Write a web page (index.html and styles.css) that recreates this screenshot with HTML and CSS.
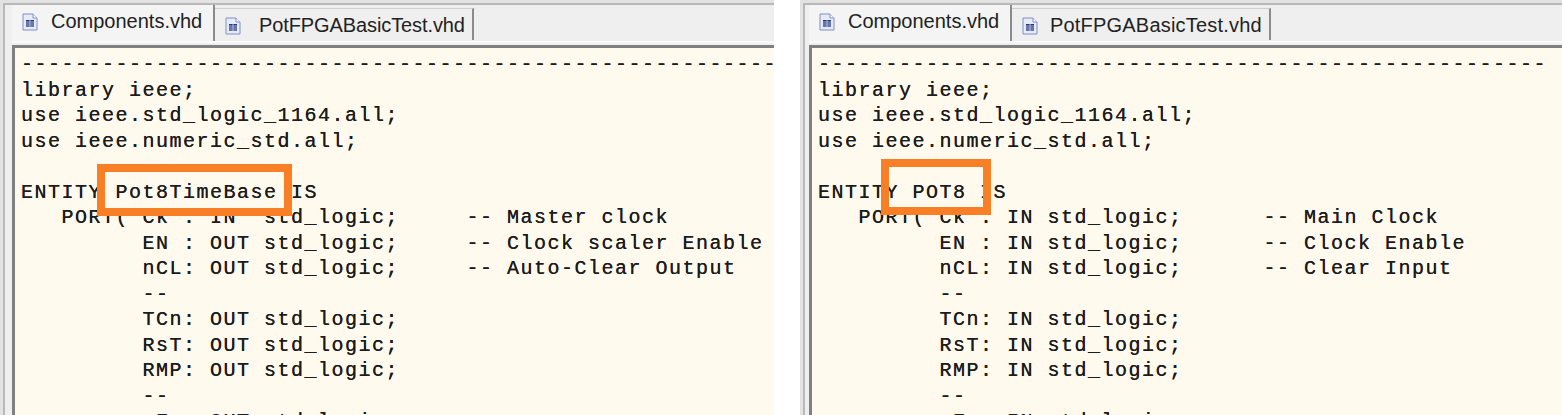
FILE: index.html
```html
<!DOCTYPE html>
<html lang="en">
<head>
<meta charset="utf-8">
<title>VHDL components</title>
<link rel="stylesheet" href="styles.css">
</head>
<body>
<div class="shots">
  <section class="panel panel-left">
    <div class="tabs">
      <div class="tab tab-active">
        <svg class="doc" viewBox="0 0 16 18"><path d="M1 1h10l4 4v12H1z" fill="#e6ebf8" stroke="#7f90c6"/><path d="M11 1v4h4" fill="#fff" stroke="#7f90c6"/><path d="M4 7h8v7H4z" fill="#26387f"/><path d="M4 9h8M4 11h8M4 13h8M8 7v7" stroke="#c9d3ef" stroke-width=".8"/></svg>
        <span>Components.vhd</span>
      </div>
      <div class="tab tab-second">
        <svg class="doc" viewBox="0 0 16 18"><path d="M1 1h10l4 4v12H1z" fill="#e6ebf8" stroke="#7f90c6"/><path d="M11 1v4h4" fill="#fff" stroke="#7f90c6"/><path d="M4 7h8v7H4z" fill="#26387f"/><path d="M4 9h8M4 11h8M4 13h8M8 7v7" stroke="#c9d3ef" stroke-width=".8"/></svg>
        <span>PotFPGABasicTest.vhd</span>
      </div>
    </div>
    <pre class="code">------------------------------------------------------------------
library ieee;
use ieee.std_logic_1164.all;
use ieee.numeric_std.all;

ENTITY Pot8TimeBase IS
   PORT( Ck : IN  std_logic;     -- Master clock
         EN : OUT std_logic;     -- Clock scaler Enable
         nCL: OUT std_logic;     -- Auto-Clear Output
         --
         TCn: OUT std_logic;
         RsT: OUT std_logic;
         RMP: OUT std_logic;
         --
         nFr: OUT std_logic;</pre>
    <div class="mark mark-left"></div>
  </section>
  <section class="panel panel-right">
    <div class="tabs">
      <div class="tab tab-active">
        <svg class="doc" viewBox="0 0 16 18"><path d="M1 1h10l4 4v12H1z" fill="#e6ebf8" stroke="#7f90c6"/><path d="M11 1v4h4" fill="#fff" stroke="#7f90c6"/><path d="M4 7h8v7H4z" fill="#26387f"/><path d="M4 9h8M4 11h8M4 13h8M8 7v7" stroke="#c9d3ef" stroke-width=".8"/></svg>
        <span>Components.vhd</span>
      </div>
      <div class="tab tab-second">
        <svg class="doc" viewBox="0 0 16 18"><path d="M1 1h10l4 4v12H1z" fill="#e6ebf8" stroke="#7f90c6"/><path d="M11 1v4h4" fill="#fff" stroke="#7f90c6"/><path d="M4 7h8v7H4z" fill="#26387f"/><path d="M4 9h8M4 11h8M4 13h8M8 7v7" stroke="#c9d3ef" stroke-width=".8"/></svg>
        <span>PotFPGABasicTest.vhd</span>
      </div>
    </div>
    <pre class="code">------------------------------------------------------
library ieee;
use ieee.std_logic_1164.all;
use ieee.numeric_std.all;

ENTITY POT8 IS
   PORT( Ck : IN std_logic;      -- Main Clock
         EN : IN std_logic;      -- Clock Enable
         nCL: IN std_logic;      -- Clear Input
         --
         TCn: IN std_logic;
         RsT: IN std_logic;
         RMP: IN std_logic;
         --
         nFr: IN std_logic;</pre>
    <div class="mark mark-right"></div>
  </section>
</div>
</body>
</html>
```
FILE: styles.css
```css
html, body {
  margin: 0;
  padding: 0;
  background: #fff;
}
body {
  width: 1562px;
  height: 415px;
  overflow: hidden;
}
.shots {
  display: flex;
  gap: 26px;
  height: 415px;
}
.panel {
  position: relative;
  overflow: hidden;
  box-sizing: border-box;
  display: flex;
  flex-direction: column;
  height: 415px;
  padding-top: 2px;
  background: #efefef;
  border-top: 3px solid #e2e2e2;
  border-left: 3px solid #e2e2e2;
  box-shadow: inset 2px 2px 0 #b8b8b8;
}
.panel-left {
  width: 774px;
  padding-left: 9px;
}
.panel-right {
  width: 762px;
  padding-left: 6px;
}
.tabs {
  display: flex;
  align-items: flex-start;
  box-sizing: border-box;
  height: 38px;
  flex: none;
  border-bottom: 2px solid #fafafa;
  font-family: "Liberation Sans", Arial, sans-serif;
  font-size: 20px;
  color: #222;
}
.tab {
  display: flex;
  align-items: center;
  box-sizing: border-box;
  border-right: 2px solid #8b8b8b;
}
.tab-active {
  gap: 13px;
  height: 36px;
  width: 203px;
  padding: 0 0 3px 10px;
  background: #f4f4f4;
}
.tab-second {
  height: 32px;
  margin-top: 3px;
  padding-top: 2px;
  padding-left: 10px;
  border-top: 1px solid #d0d0d0;
}
.panel-left .tab-second {
  gap: 18px;
  padding-right: 7px;
  letter-spacing: -0.1px;
}
.panel-right .tab-second {
  gap: 12px;
  padding-right: 7px;
  letter-spacing: 0.2px;
}
.doc {
  width: 16px;
  height: 18px;
  flex: none;
}
.code {
  flex: 1;
  margin: 2px 0 0;
  padding: 4px 0 0 6px;
  overflow: hidden;
  background: #fff9ee;
  border-top: 3px solid #808080;
  border-left: 3px solid #808080;
  font-family: "Liberation Mono", "Courier New", monospace;
  font-size: 20px;
  letter-spacing: 1.5px;
  line-height: 25.5px;
  color: #1c1c1c;
  text-shadow: 0 0 .6px #1c1c1c;
}
.mark {
  position: absolute;
  box-sizing: border-box;
  border: 8px solid #f97f26;
}
.mark-left {
  left: 94px;
  top: 161px;
  width: 195px;
  height: 52px;
}
.mark-right {
  left: 78px;
  top: 156px;
  width: 110px;
  height: 56px;
}
```
